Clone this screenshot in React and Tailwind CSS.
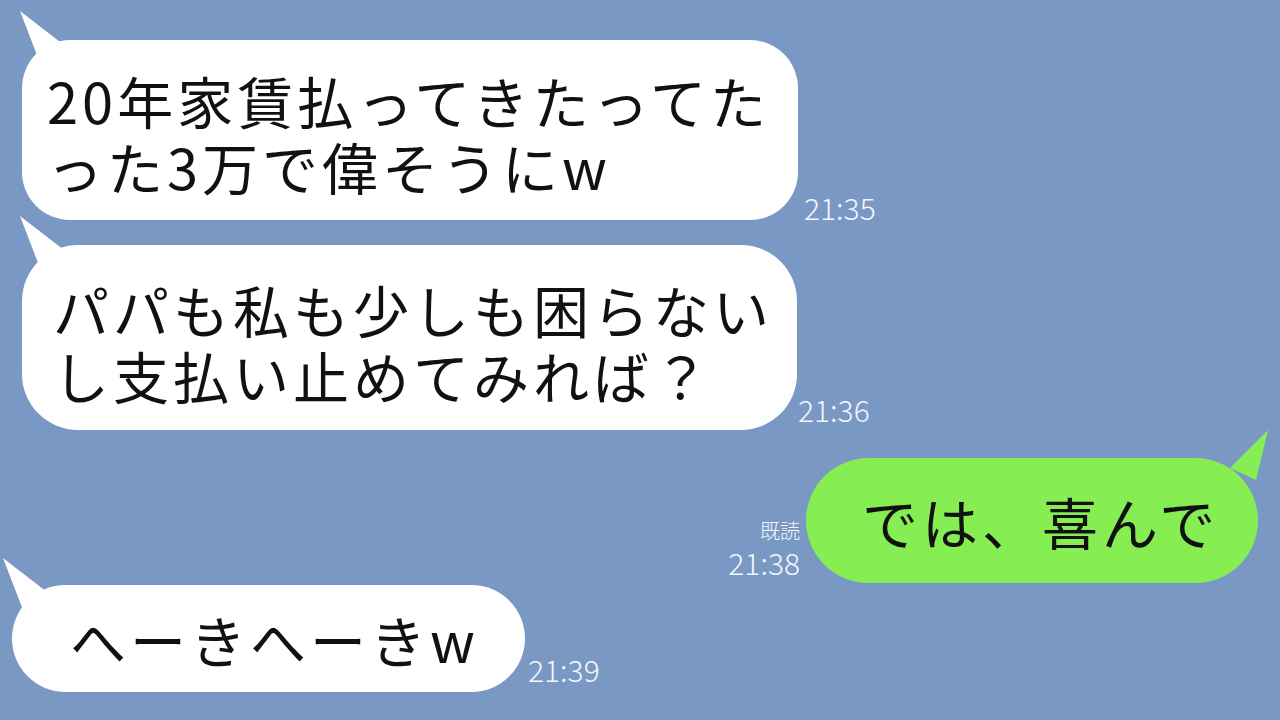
import React from 'react';

const font = { fontFamily: '"Noto Sans CJK JP", "Noto Sans", sans-serif' };

function LeftTail({ className }) {
  return (
    <svg className={`absolute ${className}`} width="50" height="56" viewBox="0 0 50 56">
      <polygon points="2,2 22,54 46,36" fill="#ffffff" />
    </svg>
  );
}

function RightTail() {
  return (
    <svg className="absolute right-[-12px] top-[-30px]" width="50" height="56" viewBox="0 0 50 56">
      <polygon points="48,2 10,40 36,52" fill="#86ed53" />
    </svg>
  );
}

function Time({ children, className = '' }) {
  return <div className={`text-[30px] leading-[32px] font-light text-[#f3f6fb] ${className}`}>{children}</div>;
}

export default function App() {
  return (
    <div className="w-[1280px] h-[720px] bg-[#7a98c4] overflow-hidden flex flex-col pt-[40px] text-[#111]" style={font}>
      {/* 1 */}
      <div className="flex items-end pl-[22px]">
        <div className="relative w-[776px] h-[180px] bg-white rounded-[48px] flex flex-col justify-center pl-[25px] pt-[6px]">
          <LeftTail className="left-[-4px] top-[-31px]" />
          <div className="relative text-[56px] leading-[66px] tracking-[4px] whitespace-nowrap">
            <div>20年家賃払ってきたってた</div>
            <div>った3万で偉そうにw</div>
          </div>
        </div>
        <Time className="ml-[6px] mb-[-3px]">21:35</Time>
      </div>

      {/* 2 */}
      <div className="flex items-end pl-[22px] mt-[25px]">
        <div className="relative w-[775px] h-[185px] bg-white rounded-[56px] flex flex-col justify-center pl-[31px] pt-[8px]">
          <LeftTail className="left-[-4px] top-[-31px]" />
          <div className="relative text-[56px] leading-[66px] tracking-[4px] whitespace-nowrap">
            <div>パパも私も少しも困らない</div>
            <div>し支払い止めてみれば？</div>
          </div>
        </div>
        <Time className="ml-[1px] mb-[5px]">21:36</Time>
      </div>

      {/* 3 */}
      <div className="flex items-end justify-end pr-[22px] mt-[28px]">
        <div className="flex flex-col items-end mr-[6px] mb-[3px] text-[#f3f6fb] font-light">
          <div className="text-[20px] leading-[26px]">既読</div>
          <div className="text-[30px] leading-[36px]">21:38</div>
        </div>
        <div className="relative w-[452px] h-[125px] bg-[#86ed53] rounded-full flex items-center pl-[56px]">
          <RightTail />
          <div className="relative text-[56px] leading-[66px] tracking-[4px] whitespace-nowrap">では、喜んで</div>
        </div>
      </div>

      {/* 4 */}
      <div className="flex items-end pl-[12px] mt-[2px]">
        <div className="relative w-[513px] h-[107px] bg-white rounded-full flex items-center pl-[58px]">
          <LeftTail className="left-[-11px] top-[-29px]" />
          <div className="relative text-[56px] leading-[66px] tracking-[4px] whitespace-nowrap">へーきへーきw</div>
        </div>
        <Time className="ml-[3px] mb-[7px]">21:39</Time>
      </div>
    </div>
  );
}
